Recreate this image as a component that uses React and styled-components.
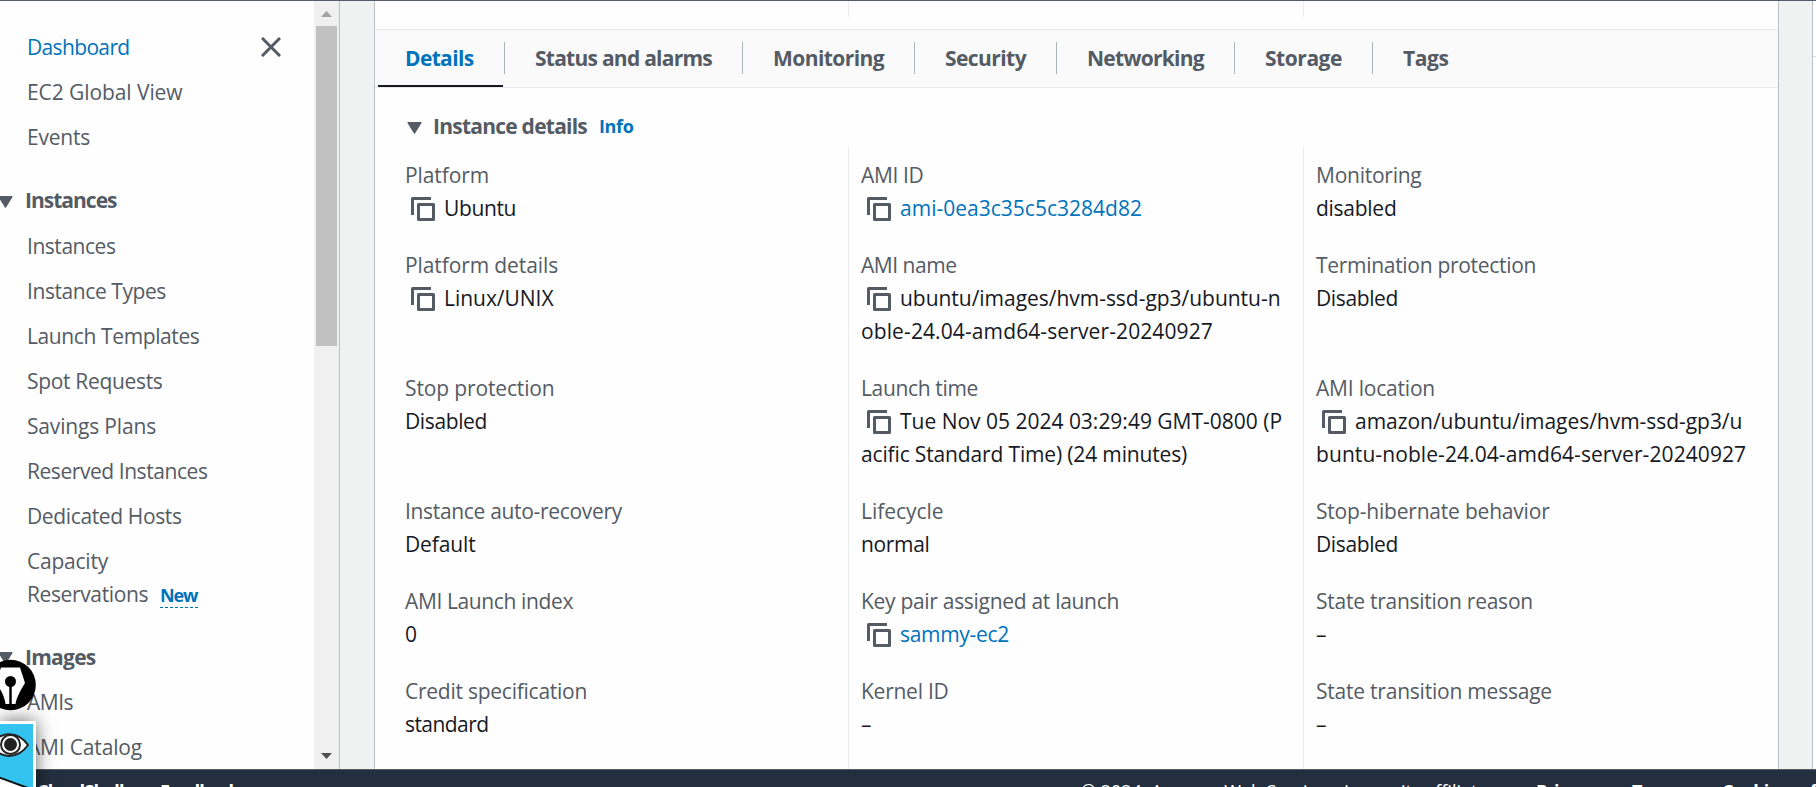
import React from 'react';
import styled, { createGlobalStyle } from 'styled-components';

const GlobalStyle = createGlobalStyle`
  * { box-sizing: border-box; }
  body {
    margin: 0;
    background: #f1f3f3;
    color: #16191f;
    font: 400 21px/33px 'Open Sans', 'Noto Sans', sans-serif;
    overflow: hidden;
  }
`;

const Page = styled.div`
  display: flex;
  flex-direction: column;
  width: 1816px;
  height: 787px;
  overflow: hidden;
  position: relative;
  border-top: 1px solid #545b6c;
`;

const Main = styled.div`
  display: flex;
  flex: none;
  height: 768px;
  overflow: hidden;
`;

const Text = styled.span`
  letter-spacing: ${(p) => p.$tracking || 0}px;
  white-space: pre;
`;

/* ---------- side navigation ---------- */

const Sidebar = styled.nav`
  width: 314px;
  flex: none;
  padding-top: 30px;
  background: #fefefe;
`;

const NavTop = styled.div`
  display: flex;
  justify-content: space-between;
  align-items: flex-start;
  padding-right: 33px;
`;

const CloseIcon = styled.svg`
  width: 20px;
  height: 20px;
  margin-top: 6px;
`;

const NavList = styled.ul`
  display: flex;
  flex-direction: column;
  gap: 12px;
  margin: 0;
  padding: 0 0 0 27px;
  list-style: none;
`;

const NavItem = styled.li`
  color: ${(p) => (p.$active ? '#0073bb' : '#545b64')};
`;

const NavHeader = styled.div`
  display: flex;
  align-items: center;
  gap: 12px;
  height: 33px;
  margin: 30px 0 12.5px;
  color: #545b64;
  font-weight: 700;
`;

const Caret = styled.svg`
  width: 15px;
  height: 12px;
  flex: none;
  margin-left: ${(p) => p.$offset || 0}px;
  margin-top: 2px;
`;

const NewBadge = styled.span`
  display: inline-block;
  width: 38px;
  height: 25px;
  margin-left: 12px;
  border-bottom: 1px dashed #0073bb;
  color: #0073bb;
  font-size: 18px;
  font-weight: 700;
  line-height: 24px;
`;

const ScrollTrack = styled.div`
  display: flex;
  flex-direction: column;
  align-items: center;
  justify-content: space-between;
  width: 25px;
  flex: none;
  background: #f0f0f0;
`;

const ScrollThumb = styled.div`
  width: 21px;
  height: 320px;
  background: #c1c1c1;
`;

const ScrollArrow = styled.svg`
  width: 11px;
  height: 6px;
  margin: ${(p) => (p.$down ? '0 0 10px' : '10px 0 9px')};
`;

const ScrollTop = styled.div`
  display: flex;
  flex-direction: column;
  align-items: center;
`;

/* ---------- content ---------- */

const Gutter = styled.div`
  width: ${(p) => p.$width}px;
  flex: none;
  border-left: 1px solid #b9c1c5;
  border-right: 1px solid #b9c1c5;
  background: #f0f2f2;
`;

const Panel = styled.main`
  display: flex;
  flex-direction: column;
  width: 1403px;
  flex: none;
  background: #fefefe;
`;

const Columns = styled.div`
  display: grid;
  grid-template-columns: 455px 455px 1fr;
  margin-left: 18px;
`;

const SummaryEnd = styled(Columns)`
  height: 16px;
  margin-bottom: 12px;
`;

const SummaryCell = styled.div`
  border-left: ${(p) => (p.$divided ? '1px solid #eaeded' : 'none')};
`;

const TabBar = styled.div`
  display: flex;
  height: 59px;
  padding-left: 3px;
  border-top: 1px solid #eaeaea;
  border-bottom: 1px solid #eaeaea;
  background: #fafafa;
  color: #545b64;
  font-weight: 700;
`;

const Tab = styled.div`
  display: flex;
  align-items: flex-start;
  width: ${(p) => p.$width}px;
  height: 57px;
  padding-top: 12px;
  padding-left: ${(p) => (p.$selected ? 27 : 30)}px;
  color: ${(p) => (p.$selected ? '#0073bb' : '#545b64')};
  border-bottom: ${(p) => (p.$selected ? '2px solid #16191f' : 'none')};
`;

const TabDivider = styled.div`
  width: 1px;
  height: 32px;
  margin-top: 12px;
  margin-left: ${(p) => (p.$first ? 1 : 0)}px;
  background: #aab7b8;
`;

const SectionHeader = styled.div`
  display: flex;
  align-items: center;
  height: 33px;
  margin: 22px 0 4px 32px;
  color: #545b64;
  font-weight: 700;
`;

const SectionTitle = styled.span`
  width: 154px;
  margin: 0 12px 0 11px;
`;

const InfoLink = styled.a`
  color: #0073bb;
  font-size: 18px;
`;

const DetailGrid = styled(Columns)`
  flex: 1;
  grid-template-rows: 102px 123px 123px 90px 90px 1fr;
`;

const Detail = styled.div`
  padding-left: 12px;
  padding-top: ${(p) => (p.$first ? 12 : 0)}px;
  border-left: ${(p) => (p.$divided ? '1px solid #eaeded' : 'none')};
`;

const Label = styled.div`
  color: #545b64;
`;

const Value = styled.div`
  color: ${(p) => (p.$link ? '#0073bb' : '#16191f')};
`;

const CopySvg = styled.svg`
  width: 24px;
  height: 24px;
  margin: 0 9px 0 6px;
  vertical-align: -5px;
`;

const AsideClip = styled.div`
  flex: 1;
  background: #fefefe;
`;

const AsidePanel = styled.aside`
  height: 56px;
  border-bottom: 1px solid #d5dbdb;
`;

/* ---------- footer ---------- */

const Footer = styled.footer`
  display: flex;
  height: 40px;
  flex: none;
  padding: 8px 0 0 37px;
  border-top: 1px solid #545b64;
  background: #232f3e;
  color: #fff;
  font-size: 18px;
  line-height: 27px;
`;

const FooterItem = styled.span`
  flex: none;
  width: ${(p) => p.$width}px;
  font-weight: ${(p) => (p.$regular ? 400 : 700)};
  letter-spacing: ${(p) => (p.$regular ? 0 : -0.8)}px;
  white-space: nowrap;
`;

/* ---------- floating widgets ---------- */

const PenBadge = styled.svg`
  position: absolute;
  left: 0;
  top: 658px;
  width: 36px;
  height: 52px;
`;

const EyeCard = styled.div`
  position: absolute;
  left: 0;
  top: 720px;
  width: 36px;
  height: 80px;
  border: solid #fff;
  border-width: 3px 3px 0 0;
  background: #33c3ee;
  box-shadow: 0 0 18px rgba(0, 0, 0, 0.6);
`;

const EyeSvg = styled.svg`
  display: block;
  width: 33px;
  height: 63px;
`;

const CopyIcon = () => (
  <CopySvg viewBox="0 0 24 24" fill="none" stroke="#545b64" strokeWidth="3" strokeLinejoin="round">
    <path d="M1.5 18V1.5H20" />
    <path d="M7.5 7.5H22.5V22.5H7.5Z" />
  </CopySvg>
);

const CaretDown = ({ offset }) => (
  <Caret $offset={offset} viewBox="0 0 15 12">
    <path d="M1 0.7H14L7.5 11.2Z" fill="#545b64" stroke="#545b64" strokeWidth="1.2" strokeLinejoin="round" />
  </Caret>
);

const topLinks = [
  ['EC2 Global View', -0.08],
  ['Events', -0.22],
];

const instanceLinks = [
  ['Instances', -0.46],
  ['Instance Types', -0.42],
  ['Launch Templates', -0.39],
  ['Spot Requests', -0.32],
  ['Savings Plans', -0.17],
  ['Reserved Instances', -0.44],
  ['Dedicated Hosts', -0.37],
];

const imageLinks = [
  ['AMIs', -0.51],
  ['AMI Catalog', -0.17],
];

const tabs = [
  ['Status and alarms', -0.75, 237],
  ['Monitoring', -0.57, 171],
  ['Security', -0.57, 141],
  ['Networking', -0.72, 177],
  ['Storage', -0.46, 137],
  ['Tags', -0.41, 140],
];

const details = [
  { label: ['Platform', -0.1], lines: [['Ubuntu', -0.38]], copy: true },
  { label: ['AMI ID', -0.35], lines: [['ami-0ea3c35c5c3284d82', 0.01]], copy: true, link: true },
  { label: ['Monitoring', -0.25], lines: [['disabled', -0.27]] },
  { label: ['Platform details', -0.1], lines: [['Linux/UNIX', -0.03]], copy: true },
  {
    label: ['AMI name', -0.47],
    lines: [['ubuntu/images/hvm-ssd-gp3/ubuntu-n', -0.03], ['oble-24.04-amd64-server-20240927', 0.11]],
    copy: true,
  },
  { label: ['Termination protection', -0.3], lines: [['Disabled', -0.38]] },
  { label: ['Stop protection', -0.14], lines: [['Disabled', -0.38]] },
  {
    label: ['Launch time', -0.35],
    lines: [['Tue Nov 05 2024 03:29:49 GMT-0800 (P', -0.01], ['acific Standard Time) (24 minutes)', -0.15]],
    copy: true,
  },
  {
    label: ['AMI location', -0.2],
    lines: [['amazon/ubuntu/images/hvm-ssd-gp3/u', -0.04], ['buntu-noble-24.04-amd64-server-20240927', 0.08]],
    copy: true,
  },
  { label: ['Instance auto-recovery', -0.32], lines: [['Default', -0.13]] },
  { label: ['Lifecycle', -0.04], lines: [['normal', -0.34]] },
  { label: ['Stop-hibernate behavior', -0.2], lines: [['Disabled', -0.38]] },
  { label: ['AMI Launch index', -0.38], lines: [['0', 0]] },
  { label: ['Key pair assigned at launch', -0.3], lines: [['sammy-ec2', -0.3]], copy: true, link: true },
  { label: ['State transition reason', -0.25], lines: [['–', 0]] },
  { label: ['Credit specification', -0.25], lines: [['standard', -0.56]] },
  { label: ['Kernel ID', -0.25], lines: [['–', 0]] },
  { label: ['State transition message', -0.22], lines: [['–', 0]] },
];

const Links = ({ items }) =>
  items.map(([text, tracking]) => (
    <NavItem key={text}>
      <Text $tracking={tracking}>{text}</Text>
    </NavItem>
  ));

export default function App() {
  return (
    <>
      <GlobalStyle />
      <Page>
        <Main>
          <Sidebar>
            <NavTop>
              <NavList>
                <NavItem $active>
                  <Text $tracking={-0.65}>Dashboard</Text>
                </NavItem>
                <Links items={topLinks} />
              </NavList>
              <CloseIcon viewBox="0 0 20 20" stroke="#545b64" strokeWidth="3">
                <path d="M1 1L19 19M19 1L1 19" />
              </CloseIcon>
            </NavTop>
            <NavHeader>
              <CaretDown offset={-2} />
              <Text $tracking={-0.99}>Instances</Text>
            </NavHeader>
            <NavList>
              <Links items={instanceLinks} />
              <NavItem>
                <Text $tracking={-0.22}>Capacity</Text>
                <br />
                <Text $tracking={-0.38}>Reservations</Text>
                <NewBadge>
                  <Text $tracking={-1.1}>New</Text>
                </NewBadge>
              </NavItem>
            </NavList>
            <NavHeader>
              <CaretDown offset={-2} />
              <Text $tracking={-0.74}>Images</Text>
            </NavHeader>
            <NavList>
              <Links items={imageLinks} />
            </NavList>
          </Sidebar>
          <ScrollTrack>
            <ScrollTop>
              <ScrollArrow viewBox="0 0 11 6">
                <path d="M5.5 0L11 6H0Z" fill="#a3a3a3" />
              </ScrollArrow>
              <ScrollThumb />
            </ScrollTop>
            <ScrollArrow $down viewBox="0 0 11 6">
              <path d="M0 0H11L5.5 6Z" fill="#505050" />
            </ScrollArrow>
          </ScrollTrack>
          <Gutter $width={36} />
          <Panel>
            <SummaryEnd>
              <SummaryCell />
              <SummaryCell $divided />
              <SummaryCell $divided />
            </SummaryEnd>
            <TabBar>
              <Tab $selected $width={125}>
                <Text $tracking={-0.65}>Details</Text>
              </Tab>
              {tabs.map(([text, tracking, width], i) => (
                <React.Fragment key={text}>
                  <TabDivider $first={i === 0} />
                  <Tab $width={width}>
                    <Text $tracking={tracking}>{text}</Text>
                  </Tab>
                </React.Fragment>
              ))}
            </TabBar>
            <SectionHeader>
              <CaretDown />
              <SectionTitle>
                <Text $tracking={-0.76}>Instance details</Text>
              </SectionTitle>
              <InfoLink>
                <Text $tracking={-0.35}>Info</Text>
              </InfoLink>
            </SectionHeader>
            <DetailGrid>
              {details.map((d, i) => (
                <Detail key={d.label[0]} $divided={i % 3 > 0} $first={i < 3}>
                  <Label>
                    <Text $tracking={d.label[1]}>{d.label[0]}</Text>
                  </Label>
                  {d.lines.map(([text, tracking], n) => (
                    <Value key={text} $link={d.link}>
                      {d.copy && n === 0 && <CopyIcon />}
                      <Text $tracking={tracking}>{text}</Text>
                    </Value>
                  ))}
                </Detail>
              ))}
            </DetailGrid>
          </Panel>
          <Gutter $width={35} />
          <AsideClip>
            <AsidePanel />
          </AsideClip>
        </Main>
        <Footer>
          <FooterItem $width={123}>CloudShell</FooterItem>
          <FooterItem $width={921}>Feedback</FooterItem>
          <FooterItem $width={455} $regular>
            © 2024, Amazon Web Services, Inc. or its affiliates.
          </FooterItem>
          <FooterItem $width={96}>Privacy</FooterItem>
          <FooterItem $width={90}>Terms</FooterItem>
          <FooterItem $width={200}>Cookie preferences</FooterItem>
        </Footer>
        <PenBadge viewBox="0 0 36 52">
          <circle cx="10.5" cy="26" r="25.3" fill="#000" />
          <path d="M1 8.5H20L25 24C21 31 17 37 15.5 45H5.5C4.5 37 1 31 -4 24Z" fill="#fff" />
          <circle cx="10.5" cy="22.5" r="5.5" fill="#000" />
          <path d="M10.5 22V46" stroke="#000" strokeWidth="2.5" />
        </PenBadge>
        <EyeCard>
          <EyeSvg viewBox="0 0 33 63">
            <path d="M-8 21C0 6.500 18 6.500 28 21C18 35.500 0 35.500 -8 21Z" fill="#fff" stroke="#222" strokeWidth="2" />
            <circle cx="10.5" cy="20.5" r="9.5" fill="#fff" stroke="#222" strokeWidth="2" />
            <circle cx="10.5" cy="20.5" r="6.5" fill="#222" />
            <path d="M-2 53L28 64H-2Z" fill="#fff" stroke="#111" strokeWidth="2" />
          </EyeSvg>
        </EyeCard>
      </Page>
    </>
  );
}
